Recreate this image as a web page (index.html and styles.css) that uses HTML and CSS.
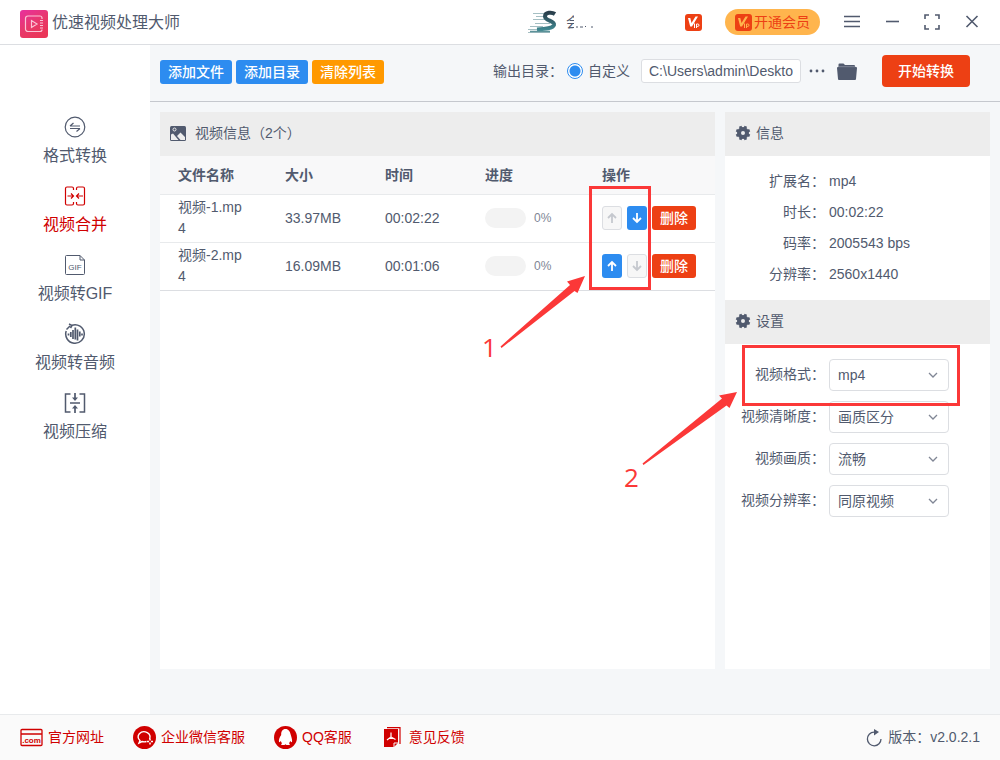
FILE: index.html
```html
<!DOCTYPE html>
<html lang="zh-CN">
<head>
<meta charset="utf-8">
<title>优速视频处理大师</title>
<link rel="stylesheet" href="styles.css">
</head>
<body>
<header class="titlebar">
  <svg class="logo" viewBox="0 0 28 28" width="28" height="28">
    <defs><linearGradient id="lg" x1="0" y1="0" x2=".6" y2="1"><stop offset="0" stop-color="#e8309f"/><stop offset=".6" stop-color="#e8386a"/><stop offset="1" stop-color="#ea3558"/></linearGradient></defs>
    <rect width="28" height="28" rx="3" fill="url(#lg)"/>
    <path d="M22 9V8a2 2 0 0 0-2-2H8a2.500 2.500 0 0 0-2.500 2.500V19A2.500 2.500 0 0 0 8 21.500h12a2 2 0 0 0 2-2" fill="none" stroke="#fbc3d5" stroke-width="1.200"/>
    <path d="M11.500 10.500v7l5.500-3.500zM20 10.500h3M20 13h3M20 15.500h3M20 18h3" fill="none" stroke="#fbc3d5" stroke-width="1.200"/>
  </svg>
  <h1 class="app-name">优速视频处理大师</h1>
  <div class="account">
    <svg viewBox="0 0 30 24" width="30" height="24">
      <defs><linearGradient id="sg" x1="0" y1="0" x2="0" y2="1"><stop offset="0" stop-color="#2a3f4c"/><stop offset="1" stop-color="#3f8790"/></linearGradient></defs>
      <path d="M5 3.500h15M8 6.500h9M5 9.500h12M7 13.500h15M2 16.500h13M0 19.500h18M0 22.500h22" stroke="#a5bfc3" stroke-width="1"/>
      <path d="M27 4c-3-2-10-2-10 2.500 0 4.500 10 4 9 8.500-1 3.500-9 4-17 4.500" fill="none" stroke="url(#sg)" stroke-width="4"/>
      <path d="M2 21.500h20" stroke="#5c9299" stroke-width="1.500"/>
    </svg>
    <span class="user"><span class="user-name">会</span><svg width="20" height="14" viewBox="0 0 20 14"><path d="M2 13h2M6 13h3M11 12.500h1M17 13h2" stroke="#515a6e" stroke-width="1"/></svg></span>
    <svg class="vip" viewBox="0 0 17 17" width="17" height="17"><rect width="17" height="17" rx="3" fill="#ed4014"/><path d="M3 4h2.300l1.200 5 4-6.500h2.500L7 12.500H5.200z" fill="#fff"/><path d="M9.500 9.500V14M11.500 14V10h1.300a1.200 1.200 0 0 1 0 2.400h-1.300" fill="none" stroke="#fff" stroke-width="1"/></svg>
  </div>
  <button class="member">
    <svg viewBox="0 0 17 17" width="17" height="17"><rect width="17" height="17" rx="3" fill="#ed4014"/><path d="M3 4h2.300l1.200 5 4-6.500h2.500L7 12.500H5.200z" fill="#ffb54d"/><path d="M9.500 9.500V14M11.500 14V10h1.300a1.200 1.200 0 0 1 0 2.400h-1.300" fill="none" stroke="#ffb54d" stroke-width="1"/></svg>
    开通会员
  </button>
  <nav class="window-controls">
    <button aria-label="菜单"><svg viewBox="0 0 16 16" width="16" height="16"><path d="M0 2.500h16M0 7.500h16M0 12.500h16"/></svg></button>
    <button aria-label="最小化"><svg viewBox="0 0 16 16" width="16" height="16"><path d="M2 7.500h13"/></svg></button>
    <button aria-label="最大化"><svg viewBox="0 0 16 16" width="16" height="16"><path d="M1 5V1h4M11 1h4v4M15 11v4h-4M5 15H1v-4" stroke-width="2"/></svg></button>
    <button aria-label="关闭"><svg viewBox="0 0 16 16" width="16" height="16"><path d="M2.500 2l11 11M13.500 2l-11 11"/></svg></button>
  </nav>
</header>

<div class="body">
  <nav class="sidebar">
    <a href="#convert"><svg viewBox="0 0 22 22" width="22" height="22"><circle cx="11" cy="11" r="9.800"/><path d="M6 10h10M6 10l3.500-3M16 12.500H6M16 12.500L12.500 15.500"/></svg>格式转换</a>
    <a href="#merge" class="active"><svg viewBox="0 0 22 22" width="22" height="22"><path d="M9.500 5V3.500a1.500 1.500 0 0 0-1.500-1.500H3a1.500 1.500 0 0 0-1.500 1.500v15A1.500 1.500 0 0 0 3 20h5a1.500 1.500 0 0 0 1.500-1.500V17M12.500 5V3.500A1.500 1.500 0 0 1 14 2h5a1.500 1.500 0 0 1 1.500 1.500v15A1.500 1.500 0 0 1 19 20h-5a1.500 1.500 0 0 1-1.500-1.500V17M3.500 11H9M13 11h6M7 8.500L9.500 11 7 13.500M15 8.500L12.500 11l2.500 2.500"/></svg>视频合并</a>
    <a href="#gif"><svg viewBox="0 0 22 22" width="22" height="22"><path d="M16 1.500H2.500a1 1 0 0 0-1 1v17a1 1 0 0 0 1 1h17a1 1 0 0 0 1-1V6zM16 1.500V6h4.500" stroke-width="1"/><text x="11" y="15.500" class="gif-text">GIF</text></svg>视频转GIF</a>
    <a href="#audio"><svg viewBox="0 0 22 22" width="22" height="22"><path d="M8 2.200A9.300 9.300 0 1 1 2.200 8M2.500 6.500L6 3M5 1l3 1.500L6.500 5" stroke-width="1.500"/><path d="M4.500 10.500v2M6.800 9v5M9 7v9M11.300 4.500v12M13.500 6.500v11M15.800 8.500v5M18 10.500v2" stroke-width="1.700"/></svg>视频转音频</a>
    <a href="#compress"><svg viewBox="0 0 22 22" width="22" height="22"><path d="M6.500 2h-5v18h5M15.500 2h5v18h-5" stroke-width="1.500"/><path d="M6 11h10M11 1v6M11 21v-6" stroke-width="1.700"/><path d="M8 5.500h6L11 9zM8 16.500h6L11 13z" fill="currentColor" stroke="none"/></svg>视频压缩</a>
  </nav>

  <div class="workspace">
    <div class="toolbar">
      <div class="file-actions">
        <button class="btn primary">添加文件</button>
        <button class="btn primary">添加目录</button>
        <button class="btn warning">清除列表</button>
      </div>
      <div class="output">
        <span>输出目录：</span>
        <input type="radio" id="custom" name="output" checked>
        <label for="custom">自定义</label>
        <input class="path" type="text" value="C:\Users\admin\Desktop" aria-label="输出目录">
        <button class="icon-btn more" aria-label="选择目录"><svg viewBox="0 0 16 4" width="16" height="4"><circle cx="2" cy="2" r="1.400"/><circle cx="8" cy="2" r="1.400"/><circle cx="14" cy="2" r="1.400"/></svg></button>
        <button class="icon-btn" aria-label="打开目录"><svg viewBox="0 0 20 17" width="20" height="17"><path d="M1.500 5V1.500A1 1 0 0 1 2.500.5h4L8 2h9a1 1 0 0 1 1 1v2z"/><path d="M0 5a1 1 0 0 1 1-1h18a1 1 0 0 1 1 1l-1 11a1 1 0 0 1-1 1H2a1 1 0 0 1-1-1z"/><path d="M1.500 3.700h17" stroke="#9aa0ae" stroke-width=".6"/></svg></button>
      </div>
      <button class="start">开始转换</button>
    </div>

    <main class="content">
      <section class="files">
        <h2 class="panel-title wide"><svg viewBox="0 0 16 16" width="16" height="16"><rect y="1" width="16" height="15" rx="1.500" fill="#515a6e"/><circle cx="4.500" cy="4.500" r="1.500" fill="none" stroke="#ededed"/><path d="M1 15V9.500l2-1L8.500 15zM7 11l3.500-3.500L15 12v3h-4.500z" fill="#ededed"/></svg>视频信息（2个）</h2>
        <table>
          <colgroup><col class="c-name"><col class="c-text"><col class="c-text"><col class="c-progress"><col></colgroup>
          <thead><tr><th>文件名称</th><th>大小</th><th>时间</th><th>进度</th><th>操作</th></tr></thead>
          <tbody>
            <tr>
              <td>视频-1.mp4</td><td>33.97MB</td><td>00:02:22</td>
              <td><div class="progress"><span class="bar"></span>0%</div></td>
              <td><div class="ops"><button class="move" disabled aria-label="上移"><svg viewBox="0 0 12 12" width="12" height="12"><path d="M6 11V2M2 6l4-4 4 4"/></svg></button><button class="move" aria-label="下移"><svg viewBox="0 0 12 12" width="12" height="12"><path d="M6 1v9M2 6l4 4 4-4"/></svg></button><button class="delete">删除</button></div></td>
            </tr>
            <tr>
              <td>视频-2.mp4</td><td>16.09MB</td><td>00:01:06</td>
              <td><div class="progress"><span class="bar"></span>0%</div></td>
              <td><div class="ops"><button class="move" aria-label="上移"><svg viewBox="0 0 12 12" width="12" height="12"><path d="M6 11V2M2 6l4-4 4 4"/></svg></button><button class="move" disabled aria-label="下移"><svg viewBox="0 0 12 12" width="12" height="12"><path d="M6 1v9M2 6l4 4 4-4"/></svg></button><button class="delete">删除</button></div></td>
            </tr>
          </tbody>
        </table>
      </section>

      <aside class="details">
        <h2 class="panel-title"><svg viewBox="0 0 16 16" width="16" height="16"><g id="gear"><path d="M5.200 1.300l5.600 13.400M10.800 1.300L5.200 14.700M1.300 5.200l13.400 5.600M1.300 10.800l13.400-5.600" stroke="#515a6e" stroke-width="2.800"/><circle cx="8" cy="8" r="4" fill="#ededed" stroke="#515a6e" stroke-width="4"/></g></svg>信息</h2>
        <dl class="info">
          <dt>扩展名：</dt><dd>mp4</dd>
          <dt>时长：</dt><dd>00:02:22</dd>
          <dt>码率：</dt><dd>2005543 bps</dd>
          <dt>分辨率：</dt><dd>2560x1440</dd>
        </dl>
        <h2 class="panel-title"><svg viewBox="0 0 16 16" width="16" height="16"><use href="#gear"/></svg>设置</h2>
        <form class="settings">
          <label for="format">视频格式：</label>
          <div class="select"><select id="format"><option>mp4</option></select><svg viewBox="0 0 10 6" width="10" height="6"><path d="M1 1l4 4 4-4"/></svg></div>
          <label for="clarity">视频清晰度：</label>
          <div class="select"><select id="clarity"><option>画质区分</option></select><svg viewBox="0 0 10 6" width="10" height="6"><path d="M1 1l4 4 4-4"/></svg></div>
          <label for="quality">视频画质：</label>
          <div class="select"><select id="quality"><option>流畅</option></select><svg viewBox="0 0 10 6" width="10" height="6"><path d="M1 1l4 4 4-4"/></svg></div>
          <label for="resolution">视频分辨率：</label>
          <div class="select"><select id="resolution"><option>同原视频</option></select><svg viewBox="0 0 10 6" width="10" height="6"><path d="M1 1l4 4 4-4"/></svg></div>
        </form>
      </aside>
    </main>
  </div>
</div>

<footer class="footer">
  <a href="#site"><svg viewBox="0 0 23 23" width="23" height="23"><path d="M2 3.500h19a1 1 0 0 1 1 1v14a1 1 0 0 1-1 1H2a1 1 0 0 1-1-1v-14a1 1 0 0 1 1-1zM1 8h21" fill="none" stroke="#d00000" stroke-width="1.300"/><text x="11.500" y="17" class="com-text">.com</text></svg>官方网址</a>
  <a href="#wechat"><svg viewBox="0 0 23 23" width="23" height="23"><circle cx="11.500" cy="11.500" r="11.500" fill="#d00000"/><path d="M16.500 13A6 5 0 1 0 7 14.500L6 17l3-1.500q2 .7 4.500 0" fill="none" stroke="#fff" stroke-width="1.400"/><path d="M17 12.500v2M17 16.500v2M14 15.500h2M18 15.500h2" stroke="#fff" stroke-width="1.500"/></svg>企业微信客服</a>
  <a href="#qq"><svg viewBox="0 0 23 23" width="23" height="23"><circle cx="11.500" cy="11.500" r="11.500" fill="#d00000"/><path d="M11.500 3C8.500 3 7 5.500 7.200 9 5.500 11.500 4.500 14 5 16q.8.500 1.800-1 .5 1.500 1.200 2.200-1.500 1-.5 1.800h3l1-.7 1 .7h3q1-.8-.5-1.800.7-.7 1.200-2.200 1 1.500 1.800 1 .5-2-1.200-7C16 5.500 14.500 3 11.500 3z" fill="#fff"/></svg>QQ客服</a>
  <a href="#feedback"><svg viewBox="0 0 23 23" width="23" height="23"><path d="M6 1.700h13V18" fill="none" stroke="#d00000" stroke-width="1.200"/><path d="M3 3h14v14l-4 4H3z" fill="#d00000"/><path d="M13 21v-4h4" fill="none" stroke="#fafafa"/><path d="M10 6.500V11l-4 3M10 11l4.500 2.500M8 12.500h4" fill="none" stroke="#fff" stroke-width="1.200"/></svg>意见反馈</a>
  <span class="version"><svg viewBox="0 0 18 18" width="18" height="18"><path d="M9 3.200A6.800 6.800 0 1 0 16 10" fill="none" stroke="#515a6e" stroke-width="1.300"/><path d="M9 0l5 3-5 3.500z" fill="#515a6e"/></svg>版本：v2.0.2.1</span>
</footer>

<svg class="annotations" width="1000" height="760" viewBox="0 0 1000 760">
  <rect x="590.500" y="187.500" width="59" height="101"/>
  <rect x="743.500" y="346.500" width="215" height="58"/>
  <path d="M500.500 346.500L570 285 567 281.500 585 276 577.500 293 574.500 291 501.500 348z"/>
  <path d="M642.500 463.500L722 398.500 719 395.500 737 392 729.500 408 726.500 405.500 643.500 465z"/>
  <text x="482" y="357">1</text>
  <text x="624" y="487">2</text>
</svg>
</body>
</html>
```
FILE: styles.css
```css
* { box-sizing: border-box; }
body {
  margin: 0;
  min-height: 100vh;
  display: flex;
  flex-direction: column;
  background: #fff;
  color: #515a6e;
  font: 14px/21px "Liberation Sans", "Noto Sans CJK SC", sans-serif;
}
button, input, select { font: inherit; color: inherit; }
button { border: 0; padding: 0; background: none; display: flex; align-items: center; justify-content: center; }
a { color: inherit; text-decoration: none; }
svg { flex: none; display: block; }

.titlebar {
  height: 45px;
  padding: 0 20px;
  display: flex;
  align-items: center;
  border-bottom: 1px solid #dcdee2;
}
.logo { margin: 3px 4px 0 0; }
.app-name { margin: 0; font-size: 16px; font-weight: 400; }
.account { margin-left: auto; display: flex; align-items: center; width: 174px; gap: 8px; }
.user { display: flex; width: 100px; }
.user-name { width: 8px; height: 16px; line-height: 16px; overflow: hidden; white-space: nowrap; }
.vip { margin-left: auto; }
.member {
  width: 95px;
  height: 26px;
  margin-left: 23px;
  gap: 2px;
  border-radius: 13px;
  background: #ffb54d;
  color: #ed4014;
  white-space: nowrap;
}
.window-controls { display: flex; gap: 24px; margin-left: 24px; }
.window-controls path { fill: none; stroke: #515a6e; stroke-width: 1.6; }

.body { flex: 1; display: flex; }
.sidebar { width: 150px; padding-top: 71px; display: flex; flex-direction: column; gap: 17px; }
.sidebar a {
  height: 52px;
  display: flex;
  flex-direction: column;
  align-items: center;
  gap: 6px;
  font-size: 16px;
  line-height: 24px;
}
.sidebar svg { fill: none; stroke: currentColor; stroke-width: 1.2; }
.sidebar .active { color: #d00000; }
.gif-text { font-size: 8px; text-anchor: middle; fill: currentColor; stroke: none; }

.workspace { flex: 1; min-width: 0; display: flex; flex-direction: column; background: #f5f7f9; }
.toolbar {
  height: 57px;
  padding: 0 30px 4px 10px;
  display: flex;
  align-items: center;
  border-bottom: 1px solid #c5c8ce;
}
.file-actions { display: flex; gap: 4px; padding-top: 2px; }
.btn { width: 72px; height: 24px; border-radius: 3px; color: #fff; font-weight: 500; }
.primary { background: #2d8cf0; }
.warning { background: #ff9900; }
.output { margin-left: auto; display: flex; align-items: center; }
.output input[type="radio"] {
  appearance: none;
  width: 16px;
  height: 16px;
  margin: 0 5px 0 4px;
  border: 1px solid #2d8cf0;
  border-radius: 50%;
  background: radial-gradient(circle, #2d8cf0 5px, #fff 6px);
}
.path { width: 160px; height: 24px; margin-left: 11px; padding: 0 7px; border: 1px solid #dcdee2; border-radius: 3px; background: #fff; }
.icon-btn { fill: #515a6e; }
.more { margin: 0 12px 0 8px; }
.start { width: 88px; height: 32px; margin-left: 25px; border-radius: 4px; background: #ed4014; color: #fff; font-weight: 500; }

.content { flex: 1; display: flex; gap: 10px; padding: 10px 10px 45px; }
.files { flex: 1; min-width: 0; background: #fff; }
.details { width: 265px; background: #fff; }
.panel-title {
  height: 44px;
  margin: 0;
  padding: 0 10px 2px;
  display: flex;
  align-items: center;
  gap: 5px;
  background: #ededed;
  font-size: 14px;
  font-weight: 400;
}
.wide { gap: 9px; }

table { width: 100%; table-layout: fixed; border-collapse: separate; border-spacing: 0; }
.c-name { width: 107px; }
.c-text { width: 100px; }
.c-progress { width: 117px; }
th, td { padding: 0 18px; text-align: left; border-bottom: 1px solid #e8eaec; word-break: break-all; }
th { height: 39px; background: #f8f8f9; font-weight: 700; }
td { height: 48px; padding-bottom: 1px; }
tbody tr:last-child td { border-color: #dcdee2; }
.progress { display: flex; align-items: center; gap: 8px; font-size: 12px; color: #808695; }
.bar { width: 41px; height: 20px; border-radius: 10px; background: #f3f3f3; }
.ops { display: flex; }
.move { width: 20px; height: 24px; flex: none; margin-right: 5px; border-radius: 3px; background: #2d8cf0; color: #fff; }
.move svg { fill: none; stroke: currentColor; stroke-width: 1.8; }
.move:disabled { border: 1px solid #dcdee2; background: #f7f7f7; color: #c5c8ce; }
.delete { width: 44px; height: 24px; flex: none; border-radius: 3px; background: #ed4014; color: #fff; font-weight: 500; }

.info, .settings { display: grid; grid-template-columns: 100px 1fr; column-gap: 4px; margin: 0; text-align: right; }
.info { padding: 10px 0; line-height: 31px; }
.info dd { margin: 0; text-align: left; }
.settings { grid-template-columns: 100px 120px; padding: 15px 0; row-gap: 10px; line-height: 30px; }
.select { position: relative; }
.select select { appearance: none; display: block; width: 100%; height: 32px; padding: 0 8px 2px; border: 1px solid #dcdee2; border-radius: 4px; background: #fff; }
.select svg { position: absolute; right: 11px; top: 13px; fill: none; stroke: #808695; stroke-width: 1.3; pointer-events: none; }

.footer {
  height: 46px;
  padding: 0 20px;
  display: flex;
  align-items: center;
  gap: 29px;
  border-top: 1px solid #e8eaec;
  background: #fafafa;
  color: #d00000;
}
.footer a, .version { display: flex; align-items: center; gap: 5px; }
.com-text { font-size: 8px; font-weight: 700; text-anchor: middle; fill: #d00000; }
.version { margin-left: auto; color: #515a6e; }

.annotations { position: absolute; left: 0; top: 0; pointer-events: none; fill: #fb3838; }
.annotations rect { fill: none; stroke: #fb3838; stroke-width: 3; }
.annotations text { font: 26px "Open Sans", sans-serif; }
```
